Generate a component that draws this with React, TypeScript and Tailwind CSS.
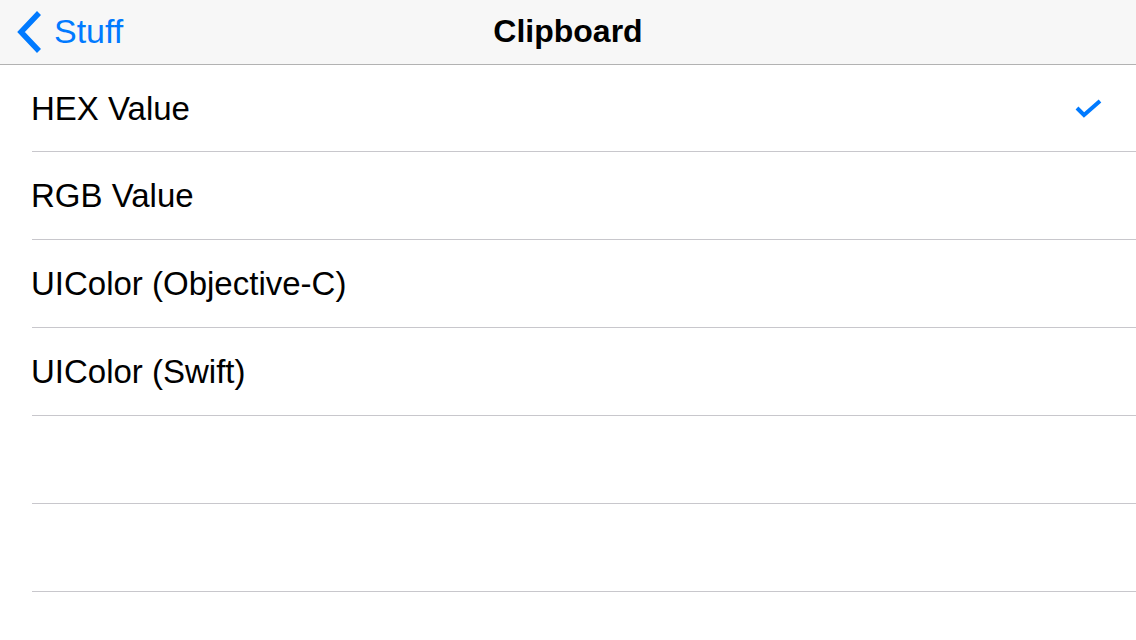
import React from "react";

const rows = ["HEX Value", "RGB Value", "UIColor (Objective-C)", "UIColor (Swift)", "", ""];

export default function App() {
  return (
    <div
      className="w-[1136px] h-[640px] bg-white overflow-hidden"
      style={{ fontFamily: '"Liberation Sans", Arial, sans-serif' }}
    >
      <div className="relative h-[65px] bg-[#f7f7f7] border-b border-[#b2b2b2] flex items-center">
        <div className="flex items-center pl-[16px] text-[#007aff]">
          <svg width="27" height="44" viewBox="0 0 27 44" className="mt-[-1px]">
            <path d="M23 3 L5 22 L23 41" fill="none" stroke="#007aff" strokeWidth="5.5" strokeLinecap="butt" />
          </svg>
          <span className="ml-[11px] text-[34px] leading-none mt-[-2px]">Stuff</span>
        </div>
        <div className="absolute inset-0 flex items-center justify-center">
          <span className="text-[32px] font-bold text-black leading-none mt-[-2px]">Clipboard</span>
        </div>
      </div>
      <div className="flex flex-col">
        {rows.map((r, i) => (
          <div key={i} className={`pl-[32px] ${i === 0 ? "h-[87px]" : "h-[88px]"}`}>
            <div className="h-full border-b border-[#c8c7cc] flex items-center justify-between pr-[34px]">
              <span className="ml-[-1px] text-[33px] text-black leading-none">{r}</span>
              {i === 0 && (
                <svg width="27" height="21" viewBox="0 0 27 21">
                  <path d="M2 10 L9 17 L25 3" fill="none" stroke="#007aff" strokeWidth="4" />
                </svg>
              )}
            </div>
          </div>
        ))}
      </div>
    </div>
  );
}
